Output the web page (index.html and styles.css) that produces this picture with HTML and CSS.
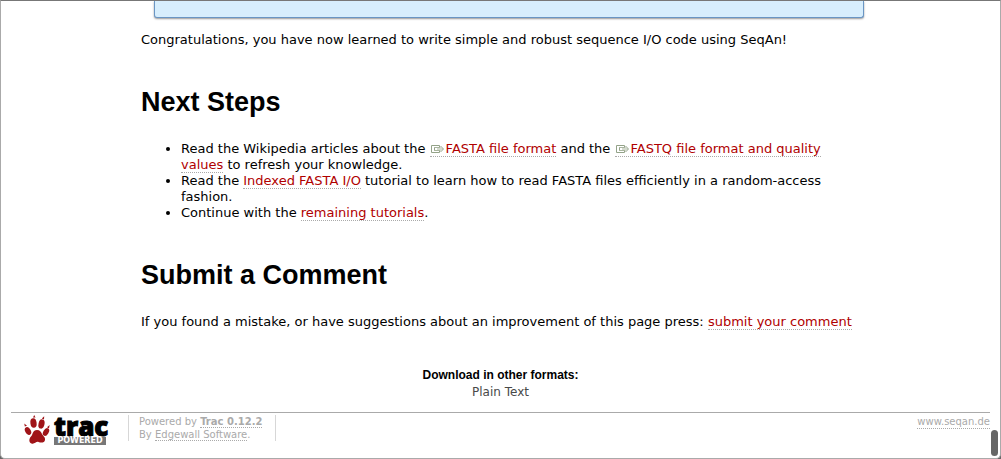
FILE: index.html
```
<!DOCTYPE html>
<html lang="en">
<head>
<meta charset="utf-8">
<title>SeqAn Tutorial</title>
<link rel="stylesheet" href="styles.css">
</head>
<body>
<svg class="symbols" aria-hidden="true">
  <symbol id="external" viewBox="0 0 13 10">
    <path d="M8.500 3V1.500H.5V8.500H8.500V7M9.500 2L12.500 5L9.500 8M3.500 3.500V6.500" fill="none" stroke="#93a288" stroke-width="1"/>
    <path d="M3 3.500H9.500M3 6.500H9.500M6 5H12" fill="none" stroke="#a9b59f" stroke-width="1"/>
  </symbol>
</svg>
<div class="page">
  <main class="wiki">
    <div class="note"></div>
    <p>Congratulations, you have now learned to write simple and robust sequence I/O code using SeqAn!</p>
    <h1>Next Steps</h1>
    <ul>
      <li>Read the Wikipedia articles about the <a href="#fasta"><svg class="ext" aria-hidden="true"><use href="#external"/></svg>FASTA file format</a> and the <a href="#fastq"><svg class="ext" aria-hidden="true"><use href="#external"/></svg>FASTQ file format and quality values</a> to refresh your knowledge.</li>
      <li>Read the <a href="#indexed">Indexed FASTA I/O</a> tutorial to learn how to read FASTA files efficiently in a random-access fashion.</li>
      <li>Continue with the <a href="#tutorials">remaining tutorials</a>.</li>
    </ul>
    <h1>Submit a Comment</h1>
    <p>If you found a mistake, or have suggestions about an improvement of this page press: <a href="#comment">submit your comment</a></p>
  </main>
  <section class="formats">
    <h2>Download in other formats:</h2>
    <a href="#text">Plain Text</a>
  </section>
  <footer class="footer">
    <a class="logo" href="#trac" aria-label="Trac Powered">
      <svg class="paw" viewBox="0 0 26 30" aria-hidden="true">
        <g fill="#a01418">
          <ellipse cx="9.500" cy="8" rx="3.100" ry="4.800" transform="rotate(-8 9.500 8)"/>
          <ellipse cx="17.500" cy="9" rx="3" ry="4.700" transform="rotate(12 17.500 9)"/>
          <ellipse cx="4" cy="16" rx="2.800" ry="4.200" transform="rotate(-28 4 16)"/>
          <ellipse cx="22" cy="17" rx="2.600" ry="4.200" transform="rotate(32 22 17)"/>
          <path d="M13 15C16 15 17 17 18 19C19 21 21.500 22 21 25C20.500 28 17 28 14.500 27C12 26.200 10.500 29.500 7.500 28.500C4.500 27.500 5 23.500 7 21.500C9 19.500 8.500 15 13 15Z"/>
          <path d="M9 2.500L10.200 0L11.500 2.600ZM17.800 3.500L20.200 1.200L20 4.500ZM.8 11.500L.3 8.500L3 10.800ZM23 12.200L25.600 10L25 13.500Z"/>
        </g>
      </svg>
      <span class="mark"><span class="word">trac</span><span class="powered">POWERED</span></span>
    </a>
    <p class="by">Powered by <a href="#about"><strong>Trac 0.12.2</strong></a><br>By <a href="#edgewall">Edgewall Software</a>.</p>
    <a class="site" href="#seqan">www.seqan.de</a>
  </footer>
</div>
<div class="thumb"></div>
</body>
</html>
```
FILE: styles.css
```
* { box-sizing: border-box; }
html { background: #666; }
body {
  margin: 0;
  min-height: 100vh;
  position: relative;
  background: #fff;
  border: 1px solid #aaa;
  border-top-color: #777;
  border-radius: 0 0 5px 5px;
  color: #000;
  font: 13px/16px Verdana, "DejaVu Sans", sans-serif;
}
.symbols { position: absolute; width: 0; height: 0; }
.page { padding: 0 10px; }
.wiki { padding: 0 112px 0 130px; }
.note {
  height: 17px;
  margin: 0 14px 0 13px;
  background: #d7eefd;
  border: 1px solid #6a96c4;
  border-top: 0;
  border-radius: 0 0 3px 3px;
  box-shadow: 0 1px 2px #999;
}
p { margin: 14px 0 0; }
h1 {
  margin: 36px 0 21px;
  font: bold 27px/36px Arial, "Liberation Sans", sans-serif;
}
ul { margin: 0; padding: 0 16px 0 40px; }
a {
  color: #b00000;
  text-decoration: none;
  border-bottom: 1px dotted #aaa;
}
.ext { width: 13px; height: 10px; margin: 0 2px 0 1px; vertical-align: -1px; }
.formats {
  margin-top: 36px;
  text-align: center;
  font-size: 12px;
}
.formats h2 {
  margin: 0;
  font: bold 12px/18px Arial, "Liberation Sans", sans-serif;
}
.formats a { color: #494949; border: 0; }
.footer {
  display: flex;
  align-items: flex-start;
  margin-top: 12px;
  padding-top: 2px;
  border-top: 1px solid #aaa;
  color: #aaa;
  font-size: 10px;
  line-height: 13px;
}
.footer a { color: #aaa; }
.footer .logo {
  display: flex;
  gap: 4px;
  width: 117px;
  padding-left: 13px;
  border: 0;
}
.paw { width: 26px; height: 30px; }
.mark { display: flex; flex-direction: column; align-items: flex-start; }
.word {
  color: #000;
  font: 800 26px/22px "Open Sans", sans-serif;
  -webkit-text-stroke: 1px #000;
}
.powered {
  width: 52px;
  height: 8px;
  background: #777;
  color: #fff;
  font: bold 8px/8px "DejaVu Sans", sans-serif;
  text-align: center;
}
.by {
  margin: 0;
  padding: 0 13px 0 10px;
  border: solid #d7d7d7;
  border-width: 0 1px;
}
.site { margin-left: auto; }
.thumb {
  position: absolute;
  right: 2px;
  bottom: 2px;
  width: 7px;
  height: 26px;
  border-radius: 4px;
  background: #666;
}
```
